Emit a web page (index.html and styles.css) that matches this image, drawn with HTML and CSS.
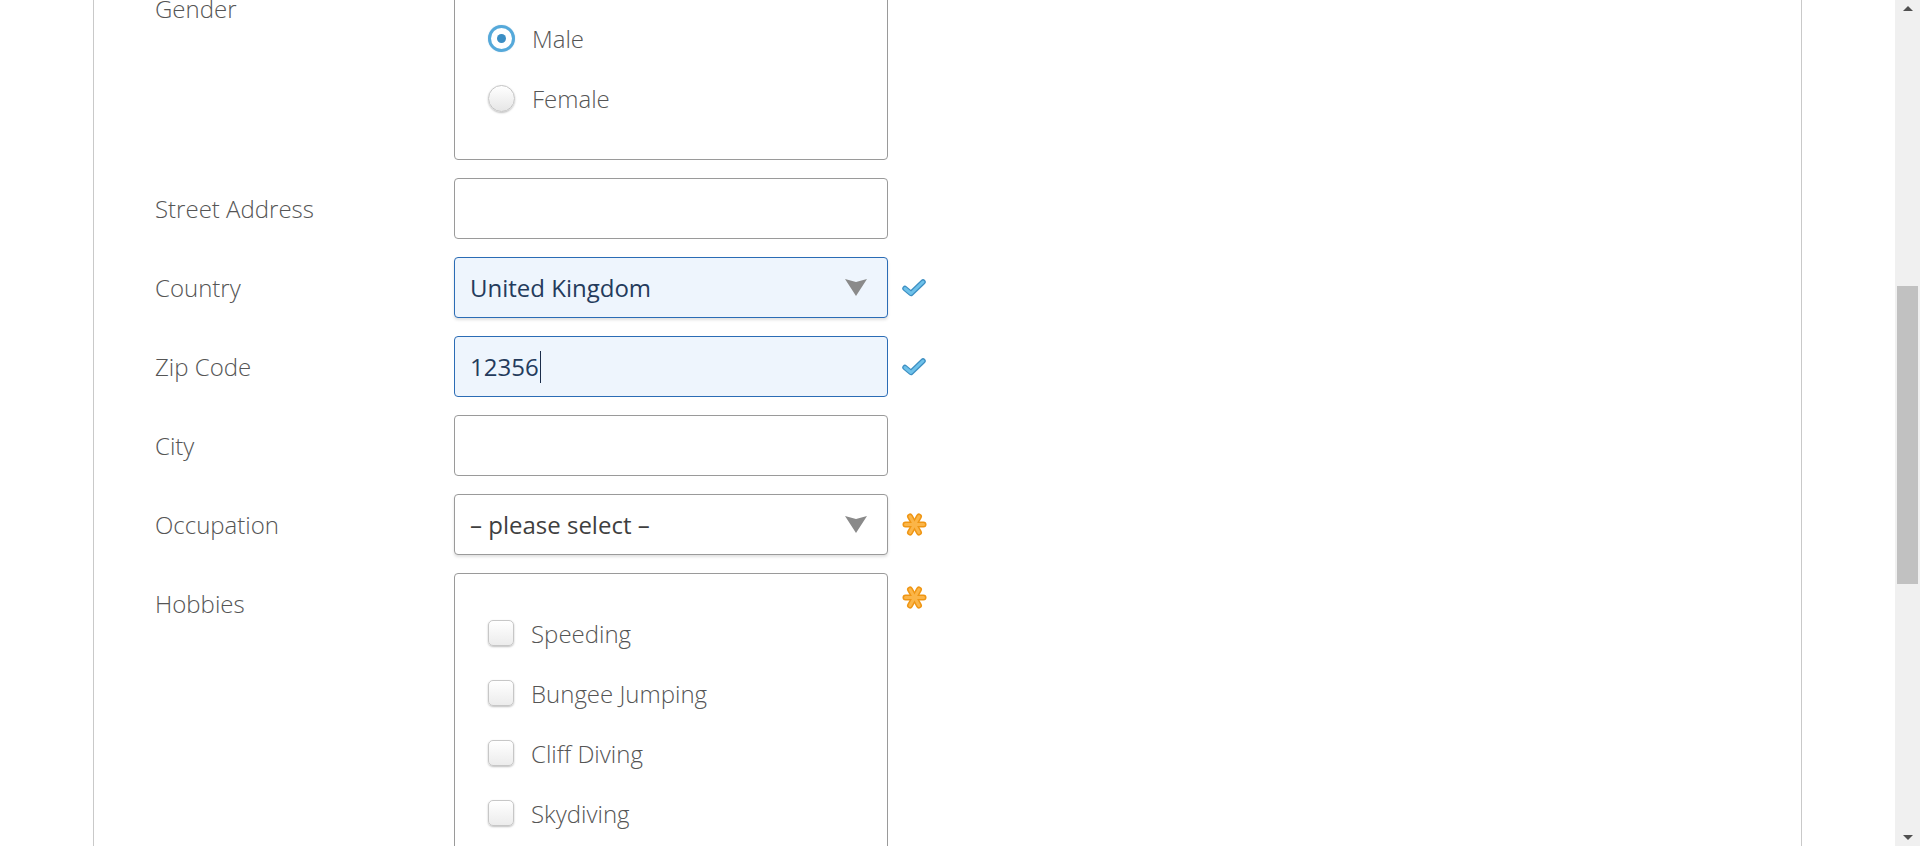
FILE: index.html
```html
<!DOCTYPE html>
<html lang="en">
<head>
<meta charset="utf-8">
<title>Form</title>
<link rel="stylesheet" href="styles.css">
</head>
<body>
<div class="page">
  <div class="sheet">
    <form class="form">
      <div class="row">
        <div class="label">Gender</div>
        <div class="box">
          <div class="choice"><span class="radio radio-on"><span class="dot"></span></span><span class="choice-text">Male</span></div>
          <div class="choice"><span class="radio"></span><span class="choice-text">Female</span></div>
        </div>
        <div class="status"></div>
      </div>

      <div class="row">
        <div class="label">Street Address</div>
        <div class="input"></div>
        <div class="status"></div>
      </div>

      <div class="row">
        <div class="label">Country</div>
        <div class="input input-valid select">
          <span class="value">United Kingdom</span>
          <svg class="arrow" width="22" height="17" viewBox="0 0 22 17"><path d="M0 0 L11 3 L22 0 L11 17 Z" fill="#8a8a8a"/></svg>
        </div>
        <div class="status">
          <svg width="24" height="18" viewBox="0 0 24 18"><path d="M3 9.5 L9 14.5 L21 3" fill="none" stroke="#3d8fc2" stroke-width="5.5" stroke-linecap="round" stroke-linejoin="round"/><path d="M3 9.5 L9 14.5 L21 3" fill="none" stroke="#6ec1ea" stroke-width="3" stroke-linecap="round" stroke-linejoin="round"/></svg>
        </div>
      </div>

      <div class="row">
        <div class="label">Zip Code</div>
        <div class="input input-valid">
          <span class="value">12356</span><span class="caret"></span>
        </div>
        <div class="status">
          <svg width="24" height="18" viewBox="0 0 24 18"><path d="M3 9.5 L9 14.5 L21 3" fill="none" stroke="#3d8fc2" stroke-width="5.5" stroke-linecap="round" stroke-linejoin="round"/><path d="M3 9.5 L9 14.5 L21 3" fill="none" stroke="#6ec1ea" stroke-width="3" stroke-linecap="round" stroke-linejoin="round"/></svg>
        </div>
      </div>

      <div class="row">
        <div class="label">City</div>
        <div class="input"></div>
        <div class="status"></div>
      </div>

      <div class="row">
        <div class="label">Occupation</div>
        <div class="input select select-plain">
          <span class="value value-muted">– please select –</span>
          <svg class="arrow" width="22" height="17" viewBox="0 0 22 17"><path d="M0 0 L11 3 L22 0 L11 17 Z" fill="#8a8a8a"/></svg>
        </div>
        <div class="status">
          <svg width="25" height="25" viewBox="0 0 25 25"><g stroke="#ef9614" stroke-width="6" stroke-linecap="round"><line x1="3.5" y1="12.5" x2="21.5" y2="12.5"/><line x1="8" y1="4.5" x2="17" y2="20.5"/><line x1="17" y1="4.5" x2="8" y2="20.5"/></g><g stroke="#fbb548" stroke-width="3" stroke-linecap="round"><line x1="3.5" y1="12.5" x2="21.5" y2="12.5"/><line x1="8" y1="4.5" x2="17" y2="20.5"/><line x1="17" y1="4.5" x2="8" y2="20.5"/></g></svg>
        </div>
      </div>

      <div class="row">
        <div class="label">Hobbies</div>
        <div class="box">
          <div class="choice"><span class="check"></span><span class="choice-text">Speeding</span></div>
          <div class="choice"><span class="check"></span><span class="choice-text">Bungee Jumping</span></div>
          <div class="choice"><span class="check"></span><span class="choice-text">Cliff Diving</span></div>
          <div class="choice"><span class="check"></span><span class="choice-text">Skydiving</span></div>
        </div>
        <div class="status status-top">
          <svg width="25" height="25" viewBox="0 0 25 25"><g stroke="#ef9614" stroke-width="6" stroke-linecap="round"><line x1="3.5" y1="12.5" x2="21.5" y2="12.5"/><line x1="8" y1="4.5" x2="17" y2="20.5"/><line x1="17" y1="4.5" x2="8" y2="20.5"/></g><g stroke="#fbb548" stroke-width="3" stroke-linecap="round"><line x1="3.5" y1="12.5" x2="21.5" y2="12.5"/><line x1="8" y1="4.5" x2="17" y2="20.5"/><line x1="17" y1="4.5" x2="8" y2="20.5"/></g></svg>
        </div>
      </div>
    </form>
  </div>

  <div class="scrollbar">
    <div class="sb-arrow sb-up"></div>
    <div class="sb-track"><div class="sb-thumb"></div></div>
    <div class="sb-arrow sb-down"></div>
  </div>
</div>
</body>
</html>
```
FILE: styles.css
```css
html, body {
  margin: 0;
  padding: 0;
  height: 100%;
  overflow: hidden;
  background: #ffffff;
  font-family: "Open Sans", "Noto Sans", sans-serif;
}

.page {
  display: flex;
  height: 846px;
}

.sheet {
  margin-left: 93px;
  width: 1707px;
  height: 846px;
  border-left: 1px solid #c9c9c9;
  border-right: 1px solid #c9c9c9;
  background: #ffffff;
  overflow: hidden;
}

.form {
  display: flex;
  flex-direction: column;
  gap: 18px;
  margin-top: -22px;
  padding-left: 61px;
}

.row {
  display: grid;
  grid-template-columns: 285px 434px 25px;
  column-gap: 14px;
  align-items: start;
}

.label {
  height: 61px;
  line-height: 61px;
  font-size: 24px;
  font-weight: 300;
  color: #555;
  white-space: nowrap;
}

.input {
  box-sizing: border-box;
  height: 61px;
  border: 1px solid #9a9a9a;
  border-radius: 4px;
  background: #fff;
  display: flex;
  align-items: center;
  padding-left: 15px;
  padding-right: 20px;
}

.input-valid {
  background: #eef5fd;
  border-color: #2b6cb5;
}

.select {
  justify-content: space-between;
  box-shadow: 0 2px 3px rgba(0, 0, 0, 0.12);
}

.value {
  font-size: 24px;
  color: #243b5c;
}

.value-muted {
  color: #3f3f3f;
}

.caret {
  display: inline-block;
  width: 1px;
  height: 32px;
  background: #1b2d4a;
  margin-left: 1px;
}

.arrow {
  display: block;
}

.box {
  box-sizing: border-box;
  border: 1px solid #9a9a9a;
  border-radius: 4px;
  background: #fff;
  padding: 29px 0 31px 33px;
}

.choice {
  height: 60px;
  display: flex;
  align-items: center;
  gap: 17px;
}

.choice-text {
  font-size: 24px;
  font-weight: 300;
  color: #555;
}

.radio {
  box-sizing: border-box;
  width: 27px;
  height: 27px;
  border-radius: 50%;
  border: 1px solid #c4c4c4;
  background: linear-gradient(#ffffff, #e6e6e6);
  box-shadow: 0 1px 2px rgba(0, 0, 0, 0.25);
  display: flex;
  align-items: center;
  justify-content: center;
}

.radio-on {
  border: 3px solid #55a9da;
  background: #ffffff;
  box-shadow: 0 0 1px rgba(60, 140, 200, 0.5);
}

.dot {
  width: 9px;
  height: 9px;
  border-radius: 50%;
  background: #3b8ec4;
}

.check {
  box-sizing: border-box;
  width: 26px;
  height: 26px;
  border-radius: 5px;
  border: 1px solid #c7c7c7;
  background: linear-gradient(#ffffff, #ececec);
  box-shadow: 0 1px 2px rgba(0, 0, 0, 0.25);
}

.status {
  height: 61px;
  display: flex;
  align-items: center;
}

.status-top {
  height: 48px;
}

.status svg {
  display: block;
}

.scrollbar {
  margin-left: auto;
  width: 25px;
  height: 846px;
  background: #f0f0f0;
  display: flex;
  flex-direction: column;
  align-items: center;
}

.sb-arrow {
  width: 0;
  height: 0;
  border-left: 5px solid transparent;
  border-right: 5px solid transparent;
}

.sb-up {
  margin-top: 6px;
  border-bottom: 5px solid #505050;
}

.sb-down {
  margin-bottom: 6px;
  border-top: 5px solid #505050;
}

.sb-track {
  flex: 1;
  width: 100%;
  display: flex;
  flex-direction: column;
  align-items: center;
}

.sb-thumb {
  margin-top: 275px;
  width: 21px;
  height: 298px;
  background: #c1c1c1;
}
```
